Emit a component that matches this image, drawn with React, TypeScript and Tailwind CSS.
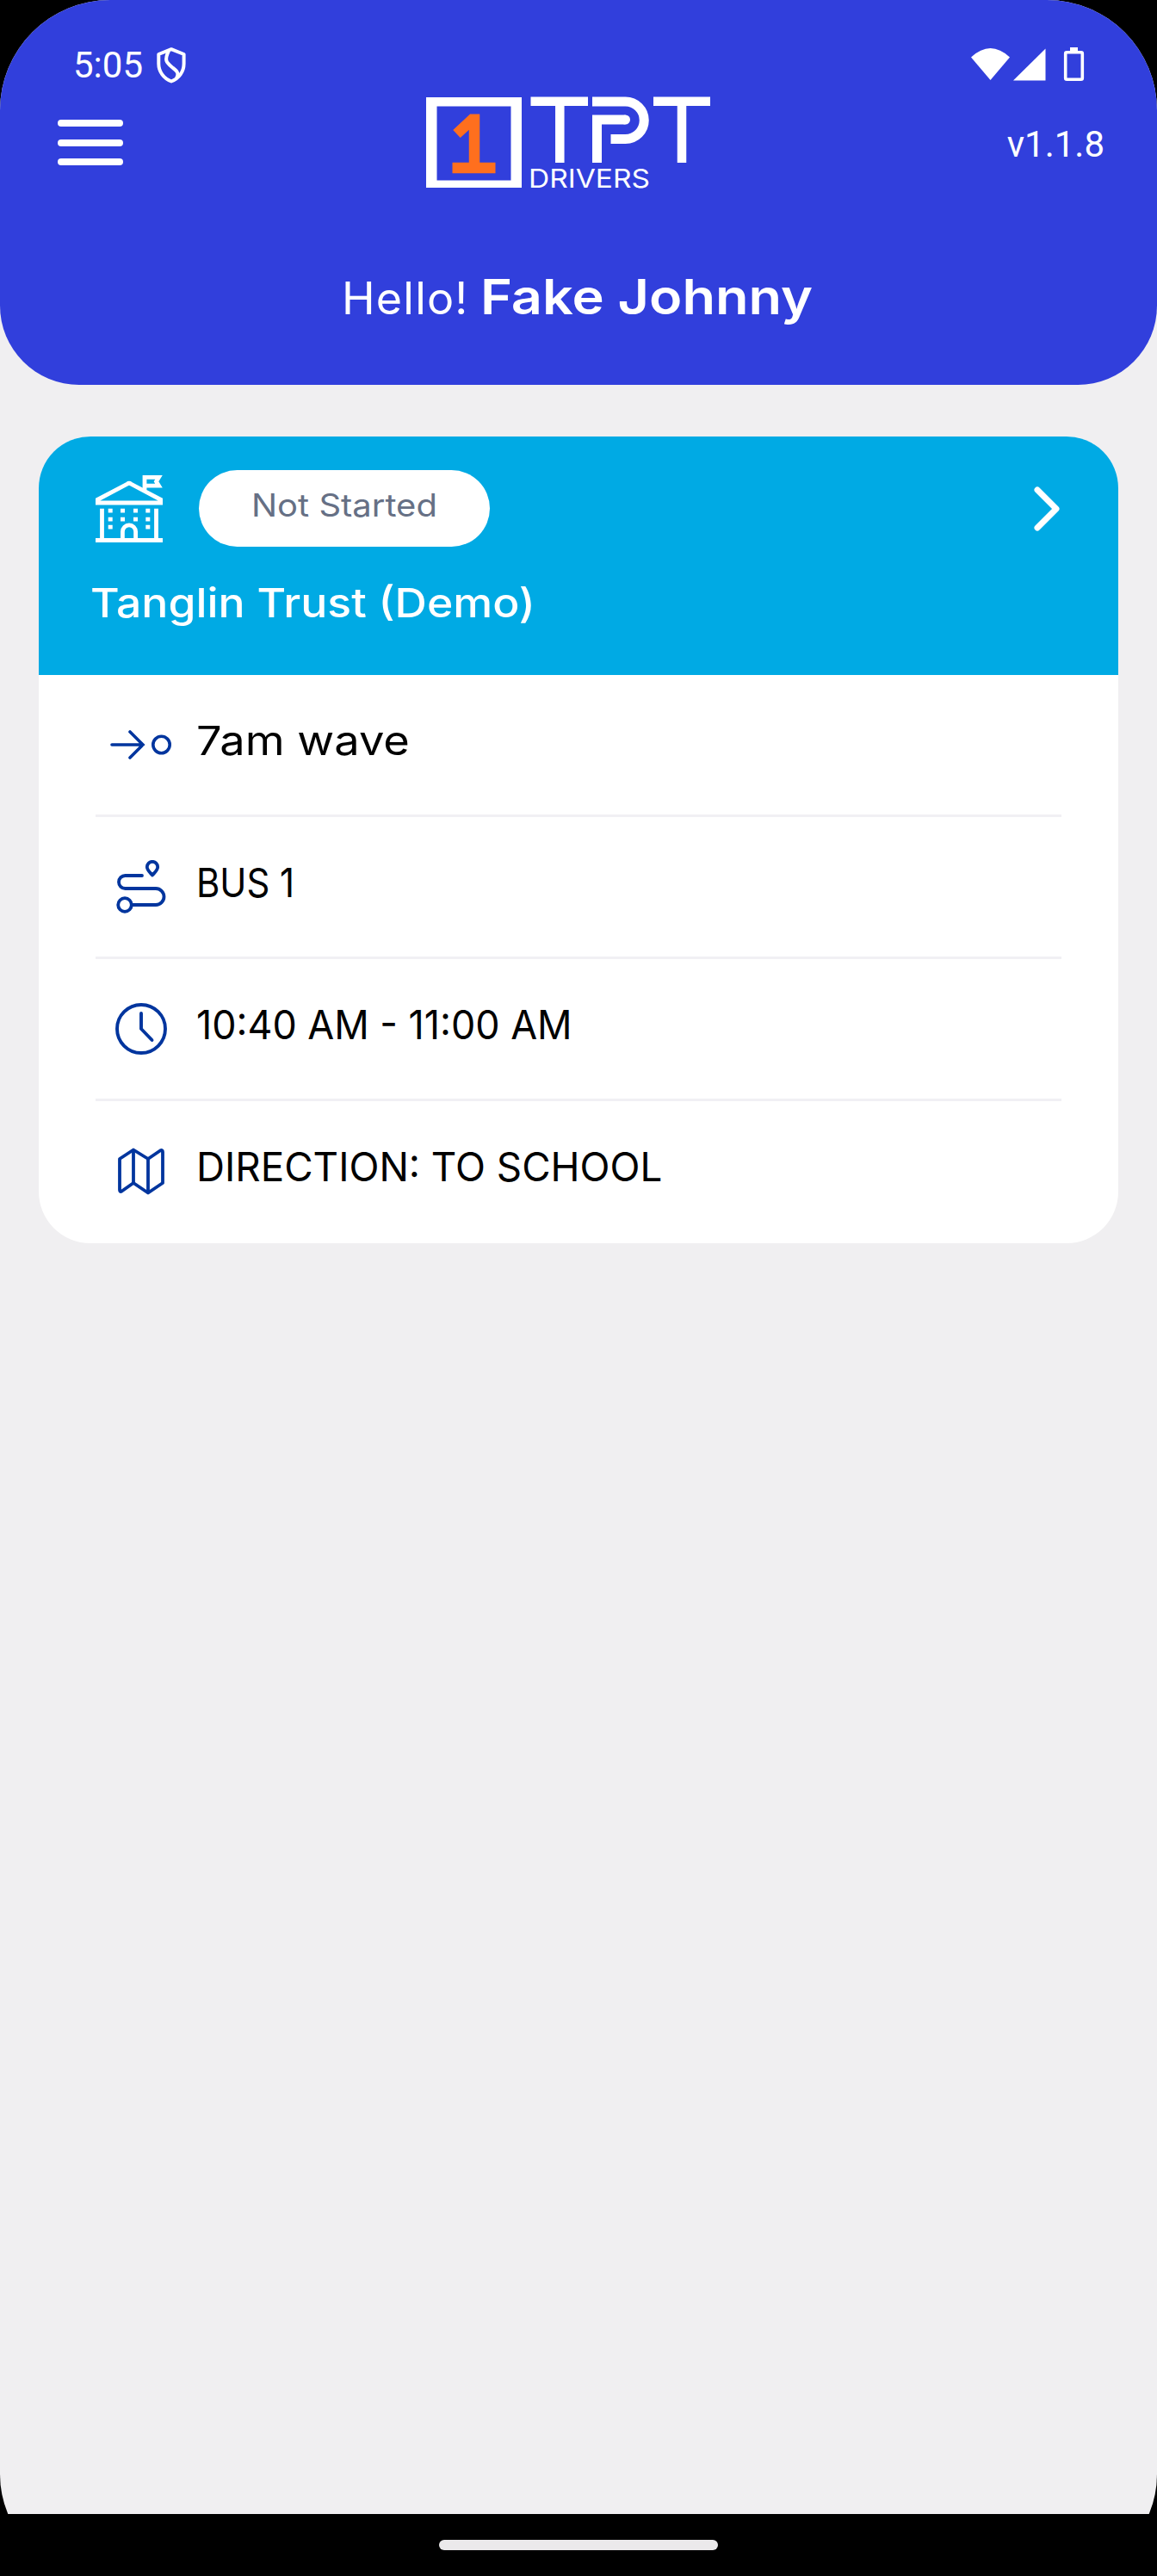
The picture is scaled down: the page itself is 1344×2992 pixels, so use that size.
import type { ReactNode } from 'react'

const ICON_BLUE = '#00359e'

function ShieldIcon() {
  return (
    <svg width="34" height="42" viewBox="0 0 34 42" fill="none" stroke="white" strokeWidth="4" strokeLinejoin="round">
      <path d="M17 2.200 31.600 8V19C31.600 28 26 36 17 39.500C8 36 2.300 28 2.300 19V8Z" />
      <path d="M14 4C8 16 12 18 19 24C26 29 25 32 23 36" />
    </svg>
  )
}

function StatusIcons() {
  return (
    <svg width="132" height="42" viewBox="0 0 132 42" fill="white">
      <path d="M0 11.500Q22.500 -9.500 45 11.500L22.500 38Z" />
      <path d="M49 38.500 86.500 1.500V38.500Z" />
      <path d="M115 0h9v4h-9z" />
      <rect x="109.700" y="5.700" width="19.600" height="31.600" rx="1.500" fill="none" stroke="white" strokeWidth="3.600" />
    </svg>
  )
}

function Logo() {
  return (
    <svg className="overflow-visible" width="330" height="105" viewBox="0 0 330 105" fill="none">
      <path d="M0 0H111V105H0ZM12.500 10.500V96.500H98.500V10.500Z" fill="white" fillRule="evenodd" />
      <path d="M35.500 42.500 53.500 25.800H56V82M30.500 82H80.500" stroke="#ff6f1e" strokeWidth="12.500" />
      <g stroke="white" strokeWidth="11">
        <path d="M121.500 4.700H188M155.300 5V76M264 4.700H330M297 5V76" strokeWidth="10.500" />
        <path d="M193 5H231.500A21.700 21.700 0 0 1 231.500 48.500H214.500" />
        <path d="M198.500 76V26H231.500" />
      </g>
      <circle cx="231.500" cy="26" r="5.500" fill="white" />
      <text x="119" y="105" fontSize="30" textLength="141" lengthAdjust="spacingAndGlyphs" fill="white" fontFamily="Inter, sans-serif">
        DRIVERS
      </text>
    </svg>
  )
}

function SchoolIcon() {
  return (
    <svg width="78" height="78" viewBox="0 0 78 78" fill="none" stroke="white" strokeWidth="4.800">
      <path d="M2.400 32V28.300L37 10Q39 8.500 41 10L75.600 28.300V32Z" />
      <path d="M57 17V2.400H73.500L70.500 7.300 73.500 12.200H57" />
      <path d="M7.500 38.700V76M70.500 38.700V76M0 75.500H78M31.400 75V65.500A7.600 7.600 0 0 1 46.600 65.500V75" />
      <path d="M14.700 41.200H19.700M29 41.200H34M44 41.200H49M58.300 41.200H63.300M14.700 51.200H19.700M29 51.200H34M44 51.200H49M58.300 51.200H63.300M14.700 60.200H19.700M58.300 60.200H63.300" />
    </svg>
  )
}

function WaveIcon() {
  return (
    <svg width="72" height="34" viewBox="0 0 72 34" fill="none" stroke={ICON_BLUE} strokeWidth="3.600" strokeLinecap="round">
      <path d="M2 17H38M23 2 38 17 23 32" />
      <circle cx="59.500" cy="17" r="9.700" />
    </svg>
  )
}

function RouteIcon() {
  return (
    <svg width="58" height="62" viewBox="0 0 58 62" fill="none" stroke={ICON_BLUE} strokeWidth="3.800" strokeLinecap="round">
      <path d="M30 18H10.500A7.500 7.500 0 0 0 10.500 33H46A9.500 9.500 0 0 1 46 52H19" />
      <circle cx="10" cy="52" r="7.800" />
      <path d="M42 17.500C39 14 35.800 11.500 35.800 8A6.200 6.200 0 0 1 48.200 8C48.200 11.500 45 14 42 17.500Z" strokeLinejoin="round" />
    </svg>
  )
}

function ClockIcon() {
  return (
    <svg width="62" height="62" viewBox="0 0 62 62" fill="none" stroke={ICON_BLUE} strokeWidth="3.900" strokeLinecap="round" strokeLinejoin="round">
      <circle cx="31" cy="31" r="28" />
      <path d="M31 13V31L43.500 44" />
    </svg>
  )
}

function MapIcon() {
  return (
    <svg width="56" height="56" viewBox="0 0 56 56" fill="none" stroke={ICON_BLUE} strokeWidth="3.800" strokeLinejoin="round">
      <path d="M3 14 19 3.500 36 14 50 4.500Q53 3 53 6V42L36 53.500 19 42 5.500 51.500Q3 53 3 50Z" />
      <path d="M19 3.500V42M36 14V53" />
    </svg>
  )
}

interface TripRowProps {
  icon: ReactNode
  label: string
  textClass: string
  last?: boolean
}

function TripRow({ icon, label, textClass, last }: TripRowProps) {
  return (
    <div className={last ? 'flex h-[165px] items-center pb-[3px]' : 'flex h-[165px] items-center border-b-[3px] border-[#f1f0f4]'}>
      <div className="flex w-[104px] shrink-0 justify-center pl-[2px]">{icon}</div>
      <span className={`ml-[13px] -mt-[10px] origin-left whitespace-nowrap text-[47px] text-black ${textClass}`}>{label}</span>
    </div>
  )
}

export default function App() {
  return (
    <div className="flex h-[2992px] w-[1344px] flex-col bg-black font-[Inter,sans-serif]">
      <div className="h-[2920px] overflow-hidden">
        <div className="h-[2992px] overflow-hidden rounded-t-[128px] rounded-b-[118px] bg-[#f0eff1]">
          <header className="h-[447px] rounded-b-[92px] bg-[#313fdc]">
            <div className="flex h-[113px] items-start justify-between pl-[85px] pr-[84px] pt-[55px]">
              <div className="flex items-start gap-[17px]">
                <span className="mt-[-4px] w-[80px] font-[Roboto,sans-serif] text-[42px] leading-[50px] text-white">5:05</span>
                <ShieldIcon />
              </div>
              <StatusIcons />
            </div>
            <div className="flex h-[105px] items-start pl-[67px] pr-[61px]">
              <button aria-label="Menu" className="mt-[26px] flex w-[76px] flex-col gap-[14.5px]">
                <span className="h-2 w-full rounded-full bg-white" />
                <span className="h-2 w-full rounded-full bg-white" />
                <span className="h-2 w-full rounded-full bg-white" />
              </button>
              <div className="ml-[352px]">
                <Logo />
              </div>
              <span className="ml-auto mt-[30px] font-[Roboto,sans-serif] text-[42px] leading-[50px] text-white">v1.1.8</span>
            </div>
            <h1 className="mt-[87px] flex items-baseline whitespace-nowrap pl-[397px] leading-[80px] text-white">
              <span className="w-[161px] text-[52px] font-normal tracking-[1.2px]">Hello!</span>
              <span className="origin-left scale-x-[1.105] text-[57px] font-semibold">Fake Johnny</span>
            </h1>
          </header>

          <main className="px-[45px] pt-[60px]">
            <section className="overflow-hidden rounded-[60px] bg-white">
              <div className="h-[277px] bg-[#00aae4] pl-[60px] pr-[67px] pt-[39px]">
                <div className="flex h-[89px] items-center pl-[6px]">
                  <SchoolIcon />
                  <div className="ml-[42px] flex h-[89px] w-[338px] items-center justify-center rounded-full bg-white pb-2 text-[37px] text-[#667085]">
                    <span className="scale-x-[1.08]">Not Started</span>
                  </div>
                  <svg className="ml-auto" width="32" height="54" viewBox="0 0 32 54" fill="none" stroke="white" strokeWidth="7" strokeLinecap="round" strokeLinejoin="round">
                    <path d="M5 5 27 27 5 49" />
                  </svg>
                </div>
                <p className="mt-[33px] w-fit origin-left scale-x-[1.1] text-[47px] font-medium leading-[64px] text-white">Tanglin Trust (Demo)</p>
              </div>
              <div className="px-[66px]">
                <TripRow icon={<WaveIcon />} label="7am wave" textClass="scale-x-[1.115]" />
                <TripRow icon={<RouteIcon />} label="BUS 1" textClass="scale-x-[0.89]" />
                <TripRow icon={<ClockIcon />} label="10:40 AM - 11:00 AM" textClass="scale-x-[0.954]" />
                <TripRow icon={<MapIcon />} label="DIRECTION: TO SCHOOL" textClass="scale-x-[0.973]" last />
              </div>
            </section>
          </main>
        </div>
      </div>
      <footer className="flex h-[72px] justify-center pt-[30px]">
        <div className="h-3 w-[324px] rounded-full bg-[#ebe9eb]" />
      </footer>
    </div>
  )
}
